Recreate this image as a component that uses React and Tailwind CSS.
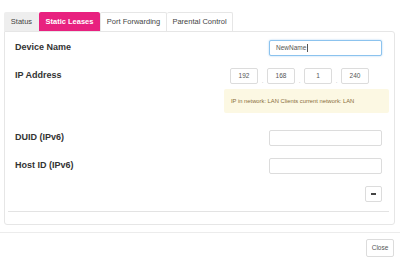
import React from "react";

const font = { fontFamily: '"Liberation Sans", Arial, sans-serif' };

function Field({ label, children, className = "" }) {
  return (
    <div className={`flex items-center justify-between pl-[7px] pr-[7px] ${className}`}>
      <span className="text-[9px] font-bold text-[#333]">{label}</span>
      {children}
    </div>
  );
}

function TextInput({ value, focused }) {
  return (
    <div
      className={`w-[113px] h-[16px] rounded-[2px] border flex items-center pl-[6px] text-[6.5px] text-[#555] bg-white ${
        focused ? "border-[#8cc3ee] shadow-[0_0_2px_rgba(102,175,233,0.6)]" : "border-[#dcdcdc]"
      }`}
    >
      {value}
      {focused && <span className="w-px h-[8px] bg-[#555] ml-px" />}
    </div>
  );
}

export default function App() {
  const tabs = [
    { id: "status", label: "Status", w: "w-[35px]", cls: "bg-[#eeeeee] text-[#444]" },
    { id: "static", label: "Static Leases", w: "w-[61px]", cls: "bg-[#e8217f] text-white font-bold" },
    { id: "port", label: "Port Forwarding", w: "w-[67px]", cls: "bg-white text-[#444] border border-b-0 border-[#e6e6e6]" },
    { id: "parental", label: "Parental Control", w: "w-[66px]", cls: "bg-white text-[#444] border border-b-0 border-l-0 border-[#e6e6e6]" },
  ];
  const ip = ["192", "168", "1", "240"];

  return (
    <div className="w-[400px] h-[259px] bg-white overflow-hidden flex flex-col" style={font}>
      {/* Tabs */}
      <div className="flex pt-[12px] pl-[4px]">
        {tabs.map((t) => (
          <div
            key={t.id}
            className={`${t.w} h-[19px] flex items-center justify-center text-[7.5px] rounded-t-[2px] ${t.cls}`}
          >
            {t.label}
          </div>
        ))}
      </div>

      {/* Panel */}
      <div className="ml-[4px] mr-[5px] h-[194px] border border-[#e6e6e6] rounded-b-[3px] rounded-tr-[3px] pt-[8px] pl-[3px] pr-[5px] flex flex-col">
        <Field label="Device Name">
          <TextInput value="NewName" focused />
        </Field>

        <Field label="IP Address" className="mt-[12px]">
          <div className="flex items-end mr-[13px]">
            {ip.map((n, i) => (
              <React.Fragment key={n}>
                {i > 0 && <span className="w-[9px] text-center text-[6px] leading-[6px] text-[#aaa]">.</span>}
                <div className="w-[28px] h-[16px] border border-[#dcdcdc] rounded-[2px] flex items-center justify-center text-[6.5px] text-[#555]">
                  {n}
                </div>
              </React.Fragment>
            ))}
          </div>
        </Field>

        <div className="ml-auto mt-[5px] w-[165px] h-[24px] bg-[#fcf8e3] rounded-[2px] flex items-center pl-[7px] text-[5.8px] text-[#8a6d3b]">
          IP in network: LAN Clients current network: LAN
        </div>

        <Field label="DUID (IPv6)" className="mt-[17px]">
          <TextInput value="" />
        </Field>

        <Field label="Host ID (IPv6)" className="mt-[12px]">
          <TextInput value="" />
        </Field>

        <div className="flex justify-end pr-[7px] mt-[12px]">
          <div className="w-[17px] h-[16px] border border-[#dcdcdc] rounded-[2px] flex items-center justify-center">
            <span className="w-[5px] h-[1.5px] bg-[#444]" />
          </div>
        </div>

        <div className="mt-[9px] border-t border-[#e3e3e3]" />
      </div>

      {/* Footer */}
      <div className="mt-[7px] border-t border-[#ececec] flex justify-end pt-[6px] pr-[6px]">
        <div className="w-[28px] h-[18px] border border-[#dcdcdc] rounded-[2px] flex items-center justify-center text-[6.5px] text-[#555]">
          Close
        </div>
      </div>
    </div>
  );
}
